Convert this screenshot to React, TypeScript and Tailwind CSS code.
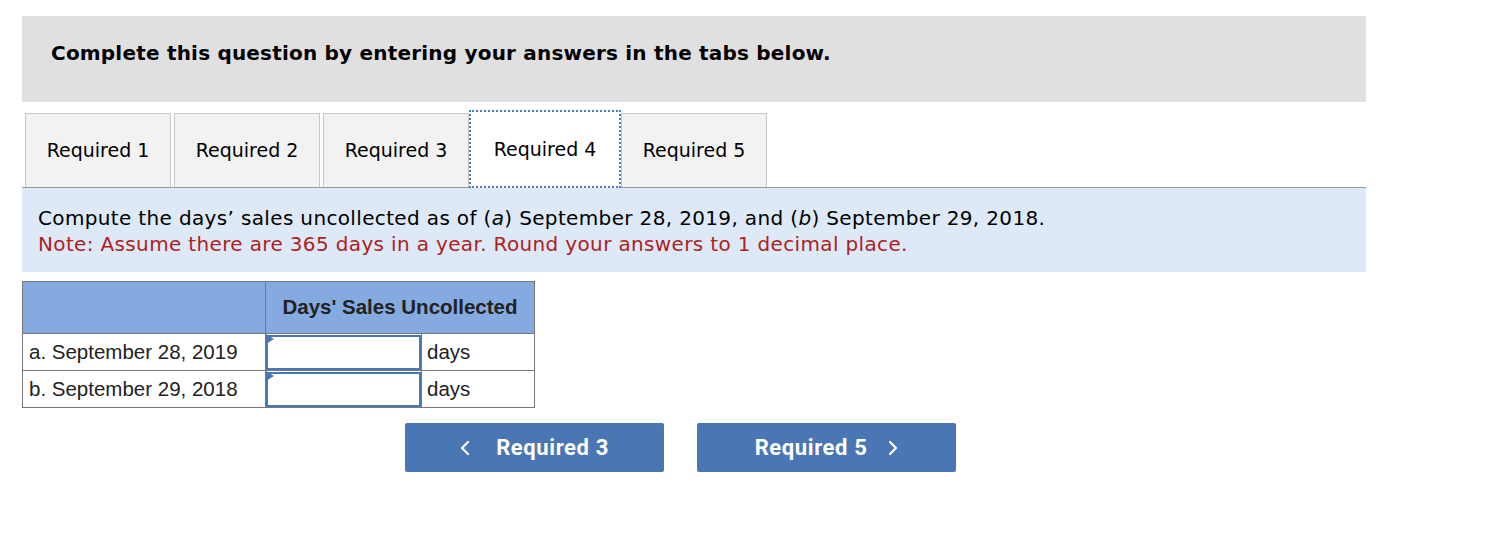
const tabs = ['Required 1', 'Required 2', 'Required 3', 'Required 4', 'Required 5']

const rows = ['a. September 28, 2019', 'b. September 29, 2018']

function Chevron({ dir }: { dir: 'left' | 'right' }) {
    return (
        <svg width="10" height="16" viewBox="0 0 10 16" fill="none" stroke="currentColor" strokeWidth="2.2" strokeLinecap="round" strokeLinejoin="round">
            {dir === 'left' ? <polyline points="8,2 2,8 8,14" /> : <polyline points="2,2 8,8 2,14" />}
        </svg>
    )
}

export default function App() {
    const active = 3

    return (
        <div className="w-[1508px] h-[552px] bg-white pt-4 pl-[22px]" style={{ fontFamily: '"DejaVu Sans", Verdana, sans-serif' }}>
            <div className="w-[1344px]">
                {/* Header */}
                <div className="h-[86px] bg-[#e0e0e0] flex items-center pl-[29px] pb-[12px]">
                    <h1 className="text-[20px] tracking-[0.2px] font-bold text-black">
                        Complete this question by entering your answers in the tabs below.
                    </h1>
                </div>

                {/* Tabs */}
                <div className="mt-[8px] flex items-end pl-[3px] border-b border-[#999]">
                    {tabs.map((tab, i) =>
                        i === active ? (
                            <div
                                key={tab}
                                className="h-[78px] w-[152px] bg-white border-2 border-dotted border-[#4a7ac4] -mb-px flex items-center justify-center text-[19px] text-black"
                            >
                                {tab}
                            </div>
                        ) : (
                            <div
                                key={tab}
                                className={`h-[74px] w-[146px] bg-[#f2f2f2] border border-b-0 border-[#c8c8c8] flex items-center justify-center text-[19px] text-black ${
                                    i > 0 && i !== active + 1 ? 'ml-[3px]' : ''
                                }`}
                            >
                                {tab}
                            </div>
                        )
                    )}
                </div>

                {/* Instructions */}
                <div className="bg-[#dde9f6] h-[84px] pl-4 pt-[17px] text-[20px] tracking-[0.35px] leading-[26px]">
                    <p className="text-black">
                        Compute the days’ sales uncollected as of (<i>a</i>) September 28, 2019, and (<i>b</i>) September 29, 2018.
                    </p>
                    <p className="text-[#b0211e]">Note: Assume there are 365 days in a year. Round your answers to 1 decimal place.</p>
                </div>

                {/* Table */}
                <table
                    className="mt-[9px] border-collapse text-[20.5px] text-[#222]"
                    style={{ fontFamily: '"Liberation Sans", Arial, sans-serif' }}
                >
                    <thead>
                        <tr className="h-[52px] bg-[#84aadf]">
                            <th className="w-[243px] border border-[#777]"></th>
                            <th colSpan={2} className="w-[269px] border border-[#777] font-bold text-[#222] text-center">
                                Days&apos; Sales Uncollected
                            </th>
                        </tr>
                    </thead>
                    <tbody>
                        {rows.map(r => (
                            <tr key={r} className="h-[37px]">
                                <td className="border border-[#777] pl-[6px] text-left whitespace-nowrap">{r}</td>
                                <td className="w-[156px] border border-[#777] p-0 relative">
                                    <div className="h-[35px] border-2 border-[#4a76b4] bg-white"></div>
                                    <span className="absolute left-0 top-0 w-0 h-0 border-y-[5px] border-y-transparent border-l-[8px] border-l-[#4a76b4]" />
                                </td>
                                <td className="w-[113px] border border-[#777] pl-[5px] text-left">days</td>
                            </tr>
                        ))}
                    </tbody>
                </table>

                {/* Navigation */}
                <div className="mt-[15px] flex gap-[33px] pl-[383px]" style={{ fontFamily: 'Roboto, Inter, sans-serif' }}>
                    <button className="w-[259px] h-[49px] rounded-[2px] bg-[#4a76b4] text-white text-[22px] tracking-[0.6px] font-bold flex items-center justify-center gap-[26px]">
                        <Chevron dir="left" />
                        <span>Required 3</span>
                    </button>
                    <button className="w-[259px] h-[49px] rounded-[2px] bg-[#4a76b4] text-white text-[22px] tracking-[0.6px] font-bold flex items-center justify-center gap-[21px]">
                        <span>Required 5</span>
                        <Chevron dir="right" />
                    </button>
                </div>
            </div>
        </div>
    )
}
